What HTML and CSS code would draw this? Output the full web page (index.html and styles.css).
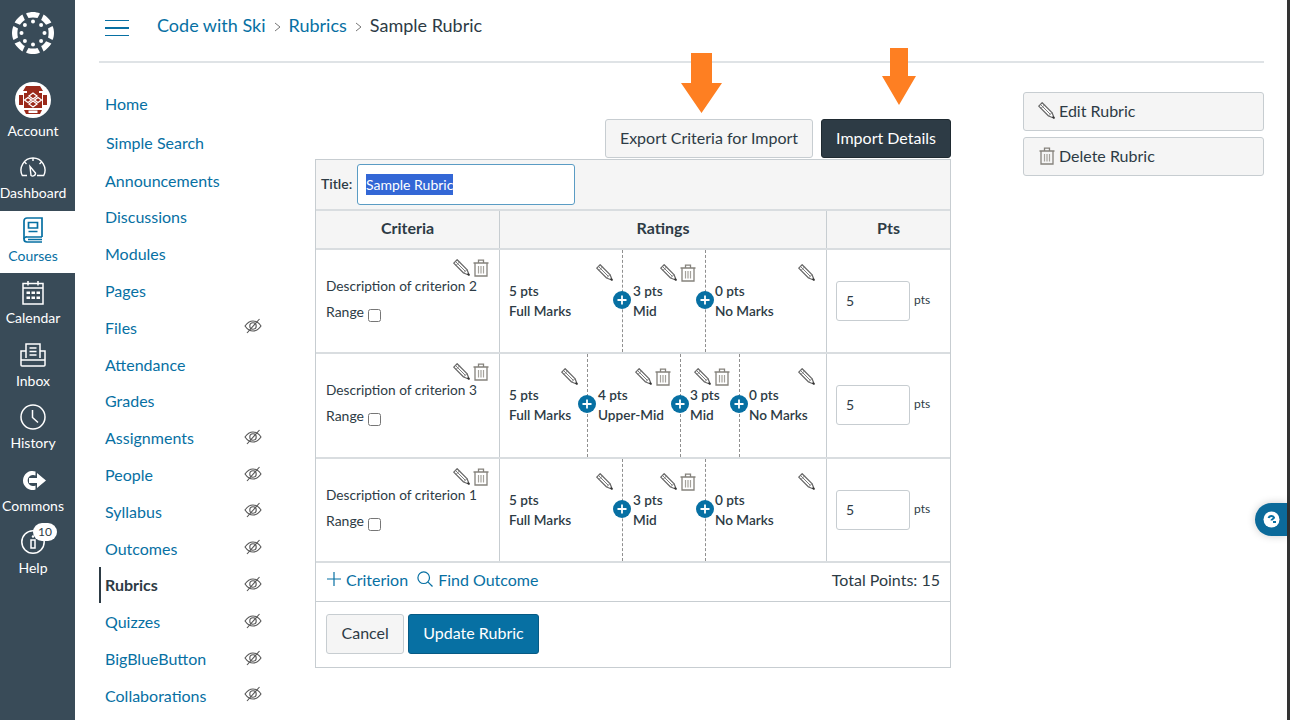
FILE: index.html
```html
<!DOCTYPE html>
<html lang="en">
<head>
    <meta charset="UTF-8">
    <meta name="viewport" content="width=device-width, initial-scale=1.0">
    <title>Sample Rubric</title>
    <link rel="stylesheet" href="styles.css">
</head>
<body>

    <!-- shared icons -->
    <svg class="defs" width="0" height="0">
        <symbol id="i-pencil" viewBox="0 0 18 18">
            <path d="M.8 4.400 4.400 .8 14.800 11.200 17.200 17.200 11.200 14.800Z" fill="#fff" stroke="#666" stroke-width="1.300" stroke-linejoin="round"/>
            <path d="M2.600 2.600 13 13M3 7 7 3M11.200 14.800 14.800 11.200" fill="none" stroke="#777" stroke-width="1"/>
            <path d="M15.400 15.400 17.200 17.200" stroke="#333" stroke-width="1.800"/>
        </symbol>
        <symbol id="i-trash" viewBox="0 0 16 18">
            <path d="M.5 4H15.500M5.500 4V1.200H10.500V4M2 4V17H14V4" fill="none" stroke="#85827c" stroke-width="1.300"/>
            <path d="M5.500 7V14.500M8 7V14.500M10.500 7V14.500" fill="none" stroke="#a5a29c" stroke-width="1.200"/>
        </symbol>
        <symbol id="i-eye" viewBox="0 0 18 18">
            <path d="M1 9C3.500 5.400 6 4 9 4S14.500 5.400 17 9C14.500 12.600 12 14 9 14S3.500 12.600 1 9Z" fill="none" stroke="#555" stroke-width="1.100"/>
            <circle cx="9" cy="9" r="3.200" fill="none" stroke="#555" stroke-width="1.100"/>
            <path d="M3 16 15.500 2" stroke="#555" stroke-width="1.100"/>
        </symbol>
        <symbol id="i-plus" viewBox="0 0 18 18">
            <circle cx="9" cy="9" r="9" fill="#0770a3"/>
            <path d="M4.500 9H13.500M9 4.500V13.500" stroke="#fff" stroke-width="1.800"/>
        </symbol>
    </svg>

    <nav class="global-nav">
        <div class="logo">
            <svg width="42" height="42" viewBox="-21 -21 42 42" fill="#fff">
                <defs>
                    <path id="petal" d="M-7 -19.500C-3 -21.500 3 -21.500 7 -19.500L4.500 -15C2 -15.800 -2 -15.800 -4.500 -15Z"/>
                    <path id="petal-small" d="M-5.500 -20.500C-2 -21.300 2 -21.300 5.500 -20.500L3.500 -15C1 -15.500 -1 -15.500 -3.500 -15Z"/>
                </defs>
                <use href="#petal"/>
                <use href="#petal" transform="rotate(90)"/>
                <use href="#petal" transform="rotate(180)"/>
                <use href="#petal" transform="rotate(270)"/>
                <use href="#petal-small" transform="rotate(45)"/>
                <use href="#petal-small" transform="rotate(135)"/>
                <use href="#petal-small" transform="rotate(225)"/>
                <use href="#petal-small" transform="rotate(315)"/>
                <circle cx="0" cy="-11.500" r="2"/>
                <circle cx="8.100" cy="-8.100" r="2"/>
                <circle cx="11.500" cy="0" r="2"/>
                <circle cx="8.100" cy="8.100" r="2"/>
                <circle cx="0" cy="11.500" r="2"/>
                <circle cx="-8.100" cy="8.100" r="2"/>
                <circle cx="-11.500" cy="0" r="2"/>
                <circle cx="-8.100" cy="-8.100" r="2"/>
            </svg>
        </div>

        <a class="nav-item nav-account">
            <span class="nav-icon">
                <svg width="36" height="36" viewBox="0 0 36 36">
                    <circle cx="18" cy="18" r="18" fill="#fff"/>
                    <path d="M11 4H25L28 9H24V11H12V9H8ZM11 32H25L27 28H9ZM4 13H8V23H4ZM28 13H32V23H28Z" fill="#9b2a1b"/>
                    <path d="M9 11H27V26H9Z" fill="#9b2a1b"/>
                    <path d="M14 14 18 11 22 14 18 17ZM14 22 18 19 22 22 18 25ZM9.500 18 13 15.500 16.500 18 13 20.500ZM19.500 18 23 15.500 26.500 18 23 20.500Z" fill="none" stroke="#fff" stroke-width="1.300"/>
                    <path d="M13.500 28.500H22.500V31H13.500Z" fill="#fff"/>
                </svg>
            </span>
            <span>Account</span>
        </a>
        <a class="nav-item">
            <span class="nav-icon">
                <svg width="26" height="20" viewBox="0 0 26 20" fill="none" stroke="#fff" stroke-width="1.400">
                    <path d="M7 18.500H2.300A12 12 0 1 1 23.700 18.500H17"/>
                    <path d="M10 9.500 15.500 16A2.800 2.800 0 0 1 11 18.500Z"/>
                    <path d="M13 1V4M4.500 5 6.500 7M21.500 5 19.500 7"/>
                </svg>
            </span>
            <span>Dashboard</span>
        </a>
        <a class="nav-item active">
            <span class="nav-icon">
                <svg width="20" height="26" viewBox="0 0 20 26" fill="none" stroke="#0770a3" stroke-width="1.700">
                    <path d="M19 20V1H4A3 3 0 0 0 1 4V22A3 3 0 0 0 4 25H19"/>
                    <path d="M1 22A2.500 2.500 0 0 1 4 20H19M5 22.500H19"/>
                    <path d="M5.500 5.500H14.500V11H5.500ZM5.500 14.500H14.500"/>
                </svg>
            </span>
            <span>Courses</span>
        </a>
        <a class="nav-item">
            <span class="nav-icon">
                <svg width="22" height="25" viewBox="0 0 22 25" fill="none" stroke="#fff" stroke-width="1.500">
                    <path d="M1 3.500H21V24H1ZM1 8H21M6 1V5.500M16 1V5.500"/>
                    <path d="M4.500 11.500H8V14H4.500ZM9.500 11.500H13V14H9.500ZM14.500 11.500H18V14H14.500ZM4.500 16.500H8V19H4.500ZM9.500 16.500H13V19H9.500ZM14.500 16.500H18V19H14.500Z" fill="#fff" stroke="none"/>
                </svg>
            </span>
            <span>Calendar</span>
        </a>
        <a class="nav-item">
            <span class="nav-icon">
                <svg width="26" height="24" viewBox="0 0 26 24" fill="none" stroke="#fff" stroke-width="1.500">
                    <path d="M6 15V1H20V15"/>
                    <path d="M9.500 5H16.500M9.500 8.500H16.500M9.500 12H16.500"/>
                    <path d="M6 8H1V22A1 1 0 0 0 2 23H24A1 1 0 0 0 25 22V8H20"/>
                    <path d="M1 17H25"/>
                </svg>
            </span>
            <span>Inbox</span>
        </a>
        <a class="nav-item">
            <span class="nav-icon">
                <svg width="26" height="26" viewBox="0 0 26 26" fill="none" stroke="#fff" stroke-width="1.500">
                    <circle cx="13" cy="13" r="12"/>
                    <path d="M12.500 6V13.500L18 18.500"/>
                </svg>
            </span>
            <span>History</span>
        </a>
        <a class="nav-item">
            <span class="nav-icon">
                <svg class="commons-icon" width="26" height="22" viewBox="0 0 26 22" fill="#fff">
                    <path d="M17 8V3L26 10.500 17 18V13H9V8Z"/>
                    <path d="M15.500 1.500A9.500 9.500 0 1 0 15.500 19.500V15.500A5.500 5.500 0 1 1 15.500 5.500Z"/>
                </svg>
            </span>
            <span>Commons</span>
        </a>
        <a class="nav-item">
            <span class="nav-icon">
                <svg width="24" height="24" viewBox="0 0 24 24" fill="none" stroke="#fff" stroke-width="1.500">
                    <circle cx="12" cy="12" r="11.200"/>
                    <path d="M10 10H14V18H10Z"/>
                    <circle cx="12" cy="6.500" r="1.200" fill="#fff" stroke="none"/>
                </svg>
                <span class="nav-badge">10</span>
            </span>
            <span>Help</span>
        </a>
    </nav>

    <div class="page">
        <header class="top-bar">
            <button class="hamburger" aria-label="Menu"><i></i><i></i><i></i></button>
            <div class="crumbs">
                <a>Code with Ski</a>
                <svg class="crumb-sep" width="7" height="10" viewBox="0 0 7 10"><path d="M1 1 6 5 1 9" fill="none" stroke="#777" stroke-width="1"/></svg>
                <a>Rubrics</a>
                <svg class="crumb-sep" width="7" height="10" viewBox="0 0 7 10"><path d="M1 1 6 5 1 9" fill="none" stroke="#777" stroke-width="1"/></svg>
                <span>Sample Rubric</span>
            </div>
        </header>

        <div class="main">
            <ul class="course-nav">
                <li class="home"><a>Home</a></li>
                <li class="search"><a>Simple Search</a></li>
                <li><a>Announcements</a></li>
                <li><a>Discussions</a></li>
                <li><a>Modules</a></li>
                <li><a>Pages</a></li>
                <li><a>Files</a><svg class="eye"><use href="#i-eye"/></svg></li>
                <li><a>Attendance</a></li>
                <li><a>Grades</a></li>
                <li><a>Assignments</a><svg class="eye"><use href="#i-eye"/></svg></li>
                <li><a>People</a><svg class="eye"><use href="#i-eye"/></svg></li>
                <li><a>Syllabus</a><svg class="eye"><use href="#i-eye"/></svg></li>
                <li><a>Outcomes</a><svg class="eye"><use href="#i-eye"/></svg></li>
                <li class="current"><a>Rubrics</a><svg class="eye"><use href="#i-eye"/></svg></li>
                <li><a>Quizzes</a><svg class="eye"><use href="#i-eye"/></svg></li>
                <li><a>BigBlueButton</a><svg class="eye"><use href="#i-eye"/></svg></li>
                <li><a>Collaborations</a><svg class="eye"><use href="#i-eye"/></svg></li>
            </ul>

            <div class="content">
                <svg class="arrow arrow-export" width="41" height="60" viewBox="0 0 41 60"><path d="M10 0H31V30H41L20.500 60 0 30H10Z" fill="#fe7f22"/></svg>
                <svg class="arrow arrow-import" width="34" height="57" viewBox="0 0 34 57"><path d="M8 0H26V28H34L17 57 0 28H8Z" fill="#fe7f22"/></svg>

                <div class="content-actions">
                    <button class="btn">Export Criteria for Import</button>
                    <button class="btn btn-dark">Import Details</button>
                </div>

                <div class="rubric">
                    <div class="title-row">
                        <label>Title:</label>
                        <div class="title-input"><span class="selected">Sample Rubric</span></div>
                    </div>

                    <div class="rubric-head">
                        <div class="col-criteria">Criteria</div>
                        <div class="col-ratings">Ratings</div>
                        <div class="col-pts">Pts</div>
                    </div>

                    <div class="rubric-row">
                        <div class="col-criteria">
                            <div class="criterion-tools"><svg class="ico"><use href="#i-pencil"/></svg><svg class="ico-trash"><use href="#i-trash"/></svg></div>
                            <p class="description">Description of criterion 2</p>
                            <p class="range">Range <input type="checkbox"></p>
                        </div>
                        <div class="col-ratings ratings-3">
                            <div class="rating">
                                <div class="rating-tools"><svg class="ico"><use href="#i-pencil"/></svg></div>
                                <div class="rating-text">5 pts<br>Full Marks</div>
                                <svg class="add-rating"><use href="#i-plus"/></svg>
                            </div>
                            <div class="rating">
                                <div class="rating-tools"><svg class="ico"><use href="#i-pencil"/></svg><svg class="ico-trash"><use href="#i-trash"/></svg></div>
                                <div class="rating-text">3 pts<br>Mid</div>
                                <svg class="add-rating"><use href="#i-plus"/></svg>
                            </div>
                            <div class="rating">
                                <div class="rating-tools"><svg class="ico"><use href="#i-pencil"/></svg></div>
                                <div class="rating-text">0 pts<br>No Marks</div>
                            </div>
                        </div>
                        <div class="col-pts"><div class="pts-input">5</div><span>pts</span></div>
                    </div>

                    <div class="rubric-row">
                        <div class="col-criteria">
                            <div class="criterion-tools"><svg class="ico"><use href="#i-pencil"/></svg><svg class="ico-trash"><use href="#i-trash"/></svg></div>
                            <p class="description">Description of criterion 3</p>
                            <p class="range">Range <input type="checkbox"></p>
                        </div>
                        <div class="col-ratings ratings-4">
                            <div class="rating">
                                <div class="rating-tools"><svg class="ico"><use href="#i-pencil"/></svg></div>
                                <div class="rating-text">5 pts<br>Full Marks</div>
                                <svg class="add-rating"><use href="#i-plus"/></svg>
                            </div>
                            <div class="rating">
                                <div class="rating-tools"><svg class="ico"><use href="#i-pencil"/></svg><svg class="ico-trash"><use href="#i-trash"/></svg></div>
                                <div class="rating-text">4 pts<br>Upper-Mid</div>
                                <svg class="add-rating"><use href="#i-plus"/></svg>
                            </div>
                            <div class="rating">
                                <div class="rating-tools"><svg class="ico"><use href="#i-pencil"/></svg><svg class="ico-trash"><use href="#i-trash"/></svg></div>
                                <div class="rating-text">3 pts<br>Mid</div>
                                <svg class="add-rating"><use href="#i-plus"/></svg>
                            </div>
                            <div class="rating">
                                <div class="rating-tools"><svg class="ico"><use href="#i-pencil"/></svg></div>
                                <div class="rating-text">0 pts<br>No Marks</div>
                            </div>
                        </div>
                        <div class="col-pts"><div class="pts-input">5</div><span>pts</span></div>
                    </div>

                    <div class="rubric-row">
                        <div class="col-criteria">
                            <div class="criterion-tools"><svg class="ico"><use href="#i-pencil"/></svg><svg class="ico-trash"><use href="#i-trash"/></svg></div>
                            <p class="description">Description of criterion 1</p>
                            <p class="range">Range <input type="checkbox"></p>
                        </div>
                        <div class="col-ratings ratings-3">
                            <div class="rating">
                                <div class="rating-tools"><svg class="ico"><use href="#i-pencil"/></svg></div>
                                <div class="rating-text">5 pts<br>Full Marks</div>
                                <svg class="add-rating"><use href="#i-plus"/></svg>
                            </div>
                            <div class="rating">
                                <div class="rating-tools"><svg class="ico"><use href="#i-pencil"/></svg><svg class="ico-trash"><use href="#i-trash"/></svg></div>
                                <div class="rating-text">3 pts<br>Mid</div>
                                <svg class="add-rating"><use href="#i-plus"/></svg>
                            </div>
                            <div class="rating">
                                <div class="rating-tools"><svg class="ico"><use href="#i-pencil"/></svg></div>
                                <div class="rating-text">0 pts<br>No Marks</div>
                            </div>
                        </div>
                        <div class="col-pts"><div class="pts-input">5</div><span>pts</span></div>
                    </div>

                    <div class="rubric-foot">
                        <a>
                            <svg width="14" height="14" viewBox="0 0 14 14"><path d="M0 7H14M7 0V14" stroke="#0770a3" stroke-width="1.200"/></svg>
                            Criterion
                        </a>
                        <a>
                            <svg width="16" height="16" viewBox="0 0 16 16" fill="none" stroke="#0770a3" stroke-width="1.200"><circle cx="6.700" cy="6.700" r="5.800"/><path d="M10.800 10.800 15.500 15.500"/></svg>
                            Find Outcome
                        </a>
                        <span class="total">Total Points: 15</span>
                    </div>

                    <div class="rubric-actions">
                        <button class="btn">Cancel</button>
                        <button class="btn btn-primary">Update Rubric</button>
                    </div>
                </div>
            </div>

            <aside class="side">
                <button class="btn side-btn"><svg class="ico"><use href="#i-pencil"/></svg>Edit Rubric</button>
                <button class="btn side-btn"><svg class="ico-trash"><use href="#i-trash"/></svg>Delete Rubric</button>
            </aside>
        </div>
    </div>

    <div class="help-tab">
        <svg width="17" height="17" viewBox="0 0 17 17">
            <circle cx="8.500" cy="8.500" r="8" fill="#fff"/>
            <path d="M5.500 7A3 2.800 0 0 1 11 6.500C11 8 8.500 8 8.500 9.500" fill="none" stroke="#0770a3" stroke-width="2"/>
            <path d="M10 10H13V12H10Z" fill="#0770a3"/>
        </svg>
    </div>

</body>
</html>
```

FILE: styles.css
```css
* {
    box-sizing: border-box;
}

html, body {
    height: 720px;
    overflow: hidden;
}

body {
    font-family: Lato, "Open Sans", sans-serif;
    color: #2d3b45;
    background-color: #fff;
    margin: 0;
    padding: 0;
    display: flex;
    border-right: 3px solid #333;
}

a {
    color: #0770a3;
    text-decoration: none;
}

p {
    margin: 0;
}

.defs {
    position: absolute;
}

/* global nav */
.global-nav {
    width: 75px;
    flex-shrink: 0;
    background-color: #394b58;
    color: #fff;
}

.logo {
    height: 85.5px;
    padding: 12px 9px 0 0;
    display: flex;
    justify-content: center;
    align-items: flex-start;
}

.nav-item {
    height: 62.5px;
    padding: 2px 9px 0 0;
    display: flex;
    flex-direction: column;
    align-items: center;
    font-size: 14px;
    line-height: 17px;
    color: #fff;
    white-space: nowrap;
}

.nav-icon {
    position: relative;
    height: 34px;
    flex-shrink: 0;
    display: flex;
    align-items: center;
    justify-content: center;
}

.nav-item.active {
    background-color: #fff;
    color: #0770a3;
}

.nav-account .nav-icon svg {
    margin-top: -10px;
}

.commons-icon {
    margin-top: 2px;
}

.nav-badge {
    position: absolute;
    left: 12px;
    top: -2px;
    width: 24px;
    height: 18px;
    border-radius: 9px;
    background-color: #fff;
    color: #2d3b45;
    font-size: 12px;
    line-height: 18px;
    text-align: center;
}

/* top */
.page {
    flex: 1;
    min-width: 0;
    padding: 0 23px 0 24px;
}

.top-bar {
    height: 63px;
    border-bottom: 2px solid #dfe3e6;
    display: flex;
    align-items: flex-start;
}

.hamburger {
    width: 24px;
    margin: 19.5px 0 0 6px;
    padding: 0;
    border: none;
    background: none;
    display: flex;
    flex-direction: column;
    gap: 6px;
}

.hamburger i {
    display: block;
    height: 1.5px;
    background-color: #0770a3;
}

.crumbs {
    margin: 14px 0 0 28px;
    display: flex;
    align-items: center;
    gap: 8px;
    font-size: 18px;
    line-height: 23px;
}

.crumb-sep {
    margin-top: 2px;
}

.main {
    display: flex;
}

/* course nav */
.course-nav {
    width: 216px;
    flex-shrink: 0;
    margin: 0;
    padding: 21.8px 0 0;
    list-style: none;
    font-size: 16px;
}

.course-nav li {
    height: 36.8px;
    width: 163px;
    padding-left: 6px;
    display: flex;
    align-items: center;
    justify-content: space-between;
}

.course-nav .home {
    margin-bottom: 2.2px;
}

.course-nav .search {
    margin-bottom: 1.2px;
    padding-left: 7px;
}

.course-nav .current {
    border-left: 2px solid #2d3b45;
    padding-left: 4px;
}

.course-nav .current a {
    color: #2d3b45;
    font-weight: 700;
}

.eye {
    width: 18px;
    height: 18px;
    margin-top: -2px;
}

/* content */
.content {
    position: relative;
    width: 636px;
    flex-shrink: 0;
    padding-top: 56px;
}

.arrow {
    position: absolute;
}

.arrow-export {
    left: 366px;
    top: -10px;
}

.arrow-import {
    left: 567px;
    top: -15px;
}

.content-actions {
    display: flex;
    justify-content: flex-end;
    gap: 8px;
    margin-bottom: 1px;
}

.btn {
    height: 39px;
    padding: 0 14px 2px;
    font-family: inherit;
    font-size: 16px;
    color: #2d3b45;
    background-color: #f5f5f5;
    border: 1px solid #c7cdd1;
    border-radius: 3px;
}

.btn-dark {
    background-color: #2d3b45;
    border-color: #1f2a31;
    color: #fff;
}

.btn-primary {
    background-color: #0770a3;
    border-color: #065a84;
    color: #fff;
}

/* rubric */
.rubric {
    border: 1px solid #c7cdd1;
    font-size: 14px;
}

.title-row {
    height: 51px;
    padding: 4px 5px 0;
    display: flex;
    align-items: flex-start;
    gap: 4px;
    background-color: #f5f5f5;
    border-bottom: 2px solid #d9dde0;
}

.title-row label {
    width: 32px;
    font-size: 14px;
    font-weight: 600;
    line-height: 39px;
}

.title-input {
    width: 218px;
    height: 41px;
    padding-left: 8px;
    display: flex;
    align-items: center;
    background-color: #fff;
    border: 1px solid #5a9cc4;
    border-radius: 3px;
}

.selected {
    background-color: #3367d6;
    color: #fff;
    line-height: 21px;
}

.rubric-head, .rubric-row {
    display: grid;
    grid-template-columns: 184px 327px 1fr;
    border-bottom: 2px solid #d9dde0;
}

.rubric-head {
    height: 39px;
    background-color: #f5f5f5;
    font-size: 16px;
    font-weight: 700;
    line-height: 33px;
    text-align: center;
}

.rubric-row {
    height: 104.3px;
}

.col-criteria, .col-ratings {
    border-right: 1px solid #c7cdd1;
}

.rubric-row .col-criteria {
    padding: 9px 10px 0;
    line-height: 18px;
}

.description {
    font-size: 13.7px;
}

.criterion-tools, .rating-tools {
    display: flex;
    justify-content: flex-end;
    gap: 3px;
}

.criterion-tools {
    height: 18px;
}

.range {
    margin-top: 8px;
}

.range input {
    margin: 0;
    vertical-align: -5px;
}

.ico {
    width: 17px;
    height: 17px;
}

.ico-trash {
    width: 16px;
    height: 18px;
}

.ratings-3, .ratings-4 {
    display: grid;
}

.ratings-3 {
    grid-template-columns: 123px 83px 1fr;
}

.ratings-4 {
    grid-template-columns: 88px 93px 59px 1fr;
}

.rating {
    position: relative;
    padding: 14px 9px 0;
    border-right: 1px dashed #8f8f8f;
    white-space: nowrap;
}

.rating:nth-child(2) {
    padding-left: 10px;
}

.rating:last-child {
    padding-right: 11px;
    border-right: none;
}

.rating-tools {
    height: 17px;
}

.rating-text {
    font-size: 13.6px;
    font-weight: 600;
    line-height: 20px;
}

.add-rating {
    position: absolute;
    right: -8.5px;
    top: 41px;
    width: 18px;
    height: 18px;
}

.rubric-row .col-pts {
    padding: 31px 0 0 9px;
    display: flex;
    align-items: flex-start;
    gap: 4px;
    font-size: 12px;
}

.rubric-row .col-pts span {
    line-height: 38px;
}

.pts-input {
    width: 74px;
    height: 40px;
    padding-left: 9px;
    font-size: 14px;
    line-height: 38px;
    background-color: #fff;
    border: 1px solid #c7cdd1;
    border-radius: 3px;
}

.rubric-foot {
    height: 39px;
    padding: 0 10px 5px 11px;
    display: flex;
    align-items: center;
    gap: 9px;
    font-size: 16px;
    border-bottom: 1px solid #c7cdd1;
}

.rubric-foot a {
    display: flex;
    align-items: center;
    gap: 5px;
}

.total {
    margin-left: auto;
}

.rubric-actions {
    height: 65px;
    padding: 12.5px 10px 0;
    display: flex;
    gap: 4px;
}

.rubric-actions .btn {
    height: 40px;
    padding: 0 14.5px 4px;
}

.rubric-actions .btn-primary {
    padding: 0 14px 4px;
}

/* side buttons */
.side {
    width: 241px;
    margin-left: 72px;
    padding-top: 29px;
    display: flex;
    flex-direction: column;
    gap: 6px;
}

.side-btn {
    display: flex;
    align-items: center;
    gap: 4px;
    text-align: left;
}

.side-btn .ico-trash {
    margin-left: 1px;
}

/* help tab */
.help-tab {
    position: absolute;
    left: 1255px;
    top: 503px;
    width: 32px;
    height: 33px;
    padding-left: 8px;
    display: flex;
    align-items: center;
    background-color: #0b6a9a;
    border-radius: 17px 0 0 17px;
    box-shadow: 0 0 8px rgba(0, 0, 0, 0.2);
}
```
